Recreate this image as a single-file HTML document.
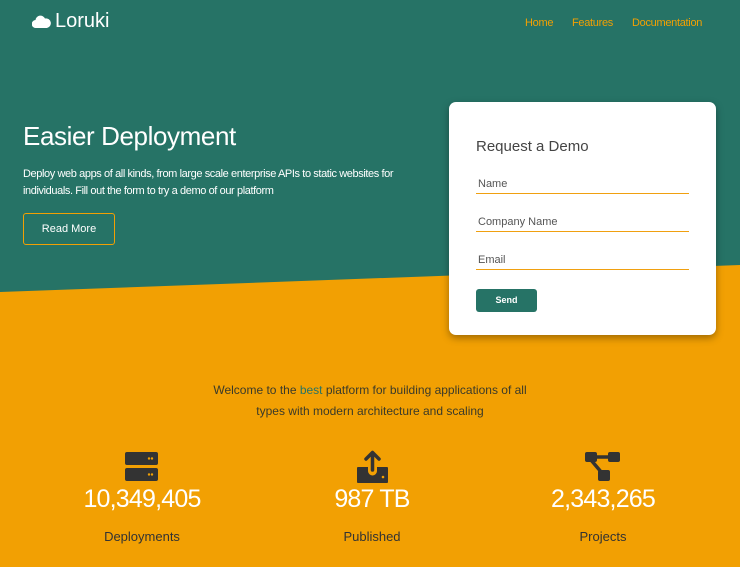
<!DOCTYPE html>
<html><head><meta charset="utf-8"><style>
*{margin:0;padding:0;box-sizing:border-box}
body{width:740px;height:567px;overflow:hidden;background:#f2a003;font-family:"Liberation Sans",sans-serif;position:relative}
.bg{position:absolute;left:0;top:0}
.abs{position:absolute}
.logo{left:32px;top:10px;color:#fff;font-size:20px;font-weight:300;display:flex;align-items:center;gap:4px}
.nav{top:17px;font-size:11px;color:#f2a003;letter-spacing:-0.3px}
h1{left:23px;top:121px;color:#fff;font-weight:normal;font-size:26px;letter-spacing:-0.4px}
.p{left:23px;top:166px;color:#fff;font-size:11px;line-height:17px;width:390px;letter-spacing:-0.4px}
.btn{left:23px;top:213px;width:92px;height:32px;border:1px solid #f2a003;border-radius:3px;color:#fff;font-size:11px;text-align:center;line-height:30px}
.card{left:449px;top:102px;width:267px;height:233px;background:#fff;border-radius:7px;box-shadow:0 3px 8px rgba(0,0,0,.35)}
.card h2{position:absolute;left:27px;top:36px;font-weight:normal;font-size:15px;color:#444}
.f{position:absolute;left:27px;width:213px;border-bottom:1px solid #f0a010;font-size:11px;color:#555;padding-left:2px;height:16px}
.send{position:absolute;left:27px;top:187px;width:61px;height:23px;background:#267366;border-radius:3px;color:#fff;font-size:9px;font-weight:bold;text-align:center;line-height:23px}
.wel{left:0;width:740px;top:380px;text-align:center;font-size:12px;line-height:21px;color:#3a3a2a}
.num{width:240px;text-align:center;color:#fff;font-size:25px;top:485px;letter-spacing:-0.8px}
.lab{width:240px;text-align:center;color:#333;font-size:13px;top:529px}
</style></head><body>
<svg class="bg" width="740" height="567"><polygon points="0,0 740,0 740,265 0,292" fill="#267366"/></svg>
<div class="abs logo"><svg width="19" height="13" viewBox="0 0 19 13"><path d="M4 13 A4 4 0 0 1 3.5 5 A5 5 0 0 1 13 3.5 A4.8 4.8 0 0 1 15 13 Z" fill="#fff"/></svg><span>Loruki</span></div>
<div class="abs nav" style="left:525px">Home</div>
<div class="abs nav" style="left:572px">Features</div>
<div class="abs nav" style="left:632px">Documentation</div>
<h1 class="abs">Easier Deployment</h1>
<div class="abs p">Deploy web apps of all kinds, from large scale enterprise APIs to static websites for individuals. Fill out the form to try a demo of our platform</div>
<div class="abs btn">Read More</div>
<div class="abs card">
<h2>Request a Demo</h2>
<div class="f" style="top:76px">Name</div>
<div class="f" style="top:114px">Company Name</div>
<div class="f" style="top:152px">Email</div>
<div class="send">Send</div>
</div>
<div class="abs wel">Welcome to the <span style="color:#267366">best</span> platform for building applications of all<br>types with modern architecture and scaling</div>
<svg class="abs" style="left:125px;top:452px" width="33" height="32"><rect x="0" y="0" width="33" height="13" rx="2" fill="#333"/><rect x="0" y="16" width="33" height="13" rx="2" fill="#333"/><circle cx="24" cy="6.5" r="1.2" fill="#f2a003"/><circle cx="27" cy="6.5" r="1.2" fill="#f2a003"/><circle cx="24" cy="22.5" r="1.2" fill="#f2a003"/><circle cx="27" cy="22.5" r="1.2" fill="#f2a003"/></svg>
<svg class="abs" style="left:356px;top:450px" width="33" height="34"><path d="M16.5 20 V3 M10 9 L16.5 2.5 L23 9" stroke="#333" stroke-width="3.5" fill="none" stroke-linecap="round" stroke-linejoin="round"/><path d="M2 17 H12 V21 A4.5 4.5 0 0 0 21 21 V17 H31 A1 1 0 0 1 32 18 V32 A1 1 0 0 1 31 33 H2 A1 1 0 0 1 1 32 V18 A1 1 0 0 1 2 17Z" fill="#333"/><circle cx="27" cy="27" r="1.3" fill="#f2a003"/></svg>
<svg class="abs" style="left:585px;top:452px" width="35" height="30"><rect x="0" y="0" width="12" height="10" rx="2" fill="#333"/><rect x="23" y="0" width="12" height="10" rx="2" fill="#333"/><rect x="13" y="18" width="12" height="11" rx="2" fill="#333"/><path d="M10 5 H25 M6 8 L17 21" stroke="#333" stroke-width="3.5"/></svg>
<div class="abs num" style="left:22px">10,349,405</div>
<div class="abs num" style="left:252px">987 TB</div>
<div class="abs num" style="left:483px">2,343,265</div>
<div class="abs lab" style="left:22px">Deployments</div>
<div class="abs lab" style="left:252px">Published</div>
<div class="abs lab" style="left:483px">Projects</div>
</body></html>
